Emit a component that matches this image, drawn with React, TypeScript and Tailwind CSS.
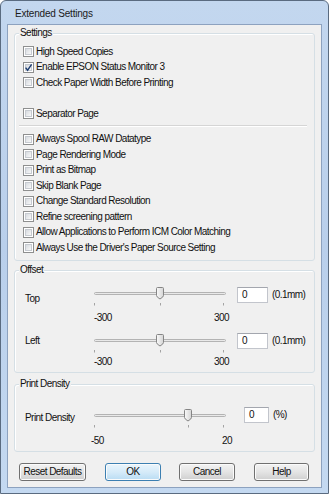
import React from "react";

const TOP_OPTIONS = [
  { label: "High Speed Copies", checked: false },
  { label: "Enable EPSON Status Monitor 3", checked: true },
  { label: "Check Paper Width Before Printing", checked: false },
];

const MORE_OPTIONS = [
  "Always Spool RAW Datatype",
  "Page Rendering Mode",
  "Print as Bitmap",
  "Skip Blank Page",
  "Change Standard Resolution",
  "Refine screening pattern",
  "Allow Applications to Perform ICM Color Matching",
  "Always Use the Driver's Paper Source Setting",
];

function CheckBox({ checked }: { checked?: boolean }) {
  return (
    <span className="relative grid h-[11px] w-[11px] shrink-0 place-items-center border border-[#8e8f8f] bg-white">
      <span className="h-[7px] w-[7px] border border-[#c6cad0] bg-gradient-to-br from-[#d7dbe0] to-[#f8f8f8]" />
      {checked && (
        <svg className="absolute left-0 top-0" width="9" height="9" viewBox="0 0 9 9">
          <path d="M1.6 4.6 L3.6 7.2 L7.6 1.4" fill="none" stroke="#1d3d70" strokeWidth="1.4" />
        </svg>
      )}
    </span>
  );
}

function CheckRow({ label, checked }: { label: string; checked?: boolean }) {
  return (
    <div className="flex h-[15.5px] items-center gap-[2px] pl-[8px]">
      <CheckBox checked={checked} />
      <span className="whitespace-nowrap">{label}</span>
    </div>
  );
}

function Group({
  title,
  className,
  children,
}: {
  title: string;
  className?: string;
  children: React.ReactNode;
}) {
  return (
    <div
      className={`relative rounded-[3px] border border-[#d5dfe5] shadow-[inset_1px_1px_0_#ffffff] ${className}`}
    >
      <span className="absolute -top-[7px] left-[4px] bg-[#f0f0f0] px-[1px]">{title}</span>
      {children}
    </div>
  );
}

// trackbar drawing: channel, tick marks, thumb
function Track({ thumb, ticks }: { thumb: number; ticks: number[] }) {
  return (
    <svg width="134" height="24" viewBox="0 0 134 24" className="block overflow-visible">
      <defs>
        <linearGradient id={`thumb-${thumb}`} x1="0" y1="0" x2="1" y2="0">
          <stop offset="0" stopColor="#fafafa" />
          <stop offset="1" stopColor="#d4d4d4" />
        </linearGradient>
      </defs>
      <rect x="0.5" y="8.5" width="131" height="2" rx="1" fill="#e9e9e9" stroke="#b3b3b3" />
      {ticks.map((t) => (
        <line key={t} x1={t + 0.5} y1="19" x2={t + 0.5} y2="21.5" stroke="#a3a3a3" />
      ))}
      <path
        d={`M${thumb - 2.5} 3.5 h5 q1 0 1 1 v7 q0 1.5 -3.5 3.5 q-3.5 -2 -3.5 -3.5 v-7 q0 -1 1 -1 z`}
        fill={`url(#thumb-${thumb})`}
        stroke="#858585"
      />
    </svg>
  );
}

function SliderRow({
  label,
  rowClass,
  labelClass,
  thumb,
  ticks,
  min,
  max,
  numsClass,
  boxClass,
  inputClass,
  unit,
}: {
  label: string;
  rowClass: string;
  labelClass: string;
  thumb: number;
  ticks: number[];
  min: string;
  max: string;
  numsClass: string;
  boxClass: string;
  inputClass: string;
  unit: string;
}) {
  return (
    <div className={`flex items-start pl-[10px] ${rowClass}`}>
      <div className={`w-[69px] shrink-0 whitespace-nowrap ${labelClass}`}>{label}</div>
      <div className="w-[132px] shrink-0">
        <Track thumb={thumb} ticks={ticks} />
        <div className={`flex justify-between ${numsClass}`}>
          <span>{min}</span>
          <span>{max}</span>
        </div>
      </div>
      <div className={`flex shrink-0 items-center ${boxClass}`}>
        <div
          className={`h-[16px] shrink-0 border border-[#c2c5cc] border-t-[#a3a6ae] bg-white pl-[4px] leading-[14px] ${inputClass}`}
        >
          0
        </div>
        <span className="ml-[4px] -mt-[1px] whitespace-nowrap">{unit}</span>
      </div>
    </div>
  );
}

function Btn({
  children,
  className,
  primary,
}: {
  children: React.ReactNode;
  className: string;
  primary?: boolean;
}) {
  return (
    <div
      className={`flex h-[18px] items-center justify-center rounded-[3px] border shadow-[inset_0_0_0_1px_#fbfbfb] ${
        primary
          ? "border-[#3c7fb1] bg-gradient-to-b from-[#eaf5fc] via-[#d6ebf9] to-[#b9dcf3]"
          : "border-[#707070] bg-gradient-to-b from-[#f3f3f3] via-[#e4e4e4] to-[#cfcfcf]"
      } ${className}`}
    >
      {children}
    </div>
  );
}

export default function App() {
  return (
    <div className="h-[494px] w-[329px] bg-white font-['Liberation_Sans',Arial,sans-serif] text-[10px] leading-[12px] tracking-[-0.55px] text-[#111]">
      <div className="flex h-full w-full flex-col rounded-t-[6px] border border-[#5a6b80] bg-gradient-to-b from-[#c3d7ef] via-[#b9cfeb] to-[#c4d9f1] px-[6px] pb-[5px]">
        <div className="h-[23px] pl-[8px] pt-[7px] text-[10px] tracking-[-0.2px] text-[#1b1b1b]">
          Extended Settings
        </div>
        <div className="flex flex-1 flex-col border border-[#8da2bf] bg-[#f0f0f0] px-[6px]">
          <Group title="Settings" className="mt-[8px] pb-[4px] pt-[10px]">
            {TOP_OPTIONS.map((o) => (
              <CheckRow key={o.label} label={o.label} checked={o.checked} />
            ))}
            <div className="h-[15.5px]" />
            <CheckRow label="Separator Page" />
            <div className="ml-[4px] mr-[7px] mt-[3px] h-px bg-[#d5d5d5]" />
            <div className="ml-[4px] mr-[7px] h-px bg-white" />
            <div className="mt-[5px]">
              {MORE_OPTIONS.map((l) => (
                <CheckRow key={l} label={l} />
              ))}
            </div>
          </Group>

          <Group title="Offset" className="mt-[9.5px] pb-[4px] pt-[13px]">
            <SliderRow
              label="Top"
              rowClass="h-[47px]"
              labelClass="mt-[9px]"
              thumb={66}
              ticks={[0, 66, 129]}
              min="-300"
              max="300"
              numsClass="mt-[4px] w-[135px]"
              boxClass="ml-[11px] mt-[3px]"
              inputClass="w-[31px]"
              unit="(0.1mm)"
            />
            <SliderRow
              label="Left"
              rowClass="h-[37px]"
              labelClass="mt-[4px]"
              thumb={66}
              ticks={[0, 66, 129]}
              min="-300"
              max="300"
              numsClass="mt-[1px] w-[135px]"
              boxClass="ml-[11px] mt-[2px]"
              inputClass="w-[31px]"
              unit="(0.1mm)"
            />
          </Group>

          <Group title="Print Density" className="mt-[11px] pb-[4px] pt-[21px]">
            <SliderRow
              label="Print Density"
              rowClass="h-[41px]"
              labelClass="mt-[6px]"
              thumb={94}
              ticks={[0, 94, 129]}
              min="-50"
              max="20"
              numsClass="-ml-[3px] mt-[5px] w-[141px]"
              boxClass="ml-[18px] mt-[1px]"
              inputClass="w-[25px]"
              unit="(%)"
            />
          </Group>

          <div className="ml-[5px] mt-[11px] flex">
            <Btn className="w-[67px]">Reset Defaults</Btn>
            <Btn className="ml-[19px] w-[56px]" primary>
              OK
            </Btn>
            <Btn className="ml-[18px] w-[56px]">Cancel</Btn>
            <Btn className="ml-[19px] w-[55px]">Help</Btn>
          </div>
        </div>
      </div>
    </div>
  );
}
